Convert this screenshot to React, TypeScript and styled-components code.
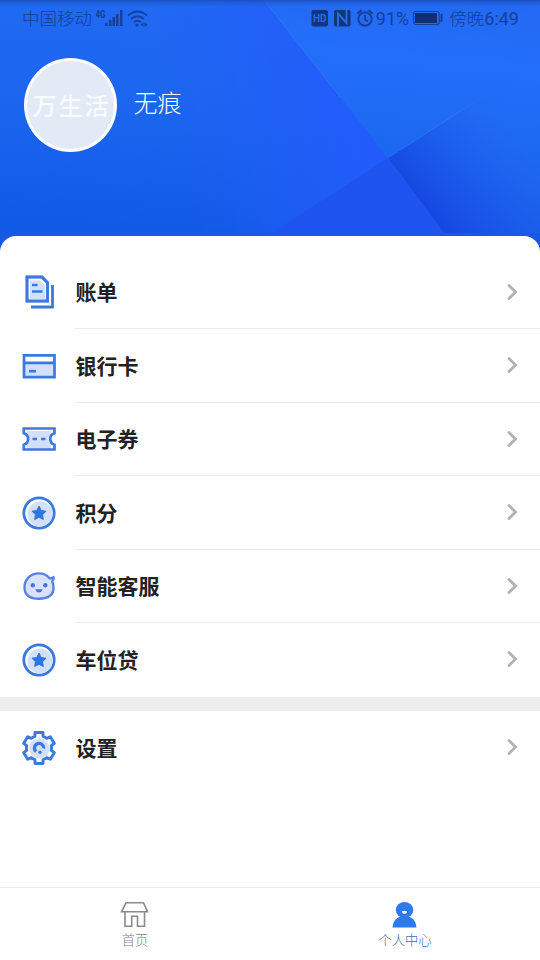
import React from "react";
import styled, { createGlobalStyle } from "styled-components";

const GlobalStyle = createGlobalStyle`
  * { box-sizing: border-box; }
  body { margin: 0; background: #fff; }
`;

const cjk = `"Noto Sans CJK SC", sans-serif`;

const Screen = styled.div`
  width: 540px;
  height: 960px;
  display: flex;
  flex-direction: column;
  overflow: hidden;
  background: #fff;
  font-family: ${cjk};
`;

const Header = styled.header`
  position: relative;
  flex: none;
  height: 252px;
  background: #1a58e4;
`;

const Backdrop = styled.svg`
  position: absolute;
  top: 0;
  left: 0;
  display: block;
`;

const StatusBar = styled.div`
  position: relative;
  height: 37px;
  padding: 0 21px 0 22px;
  display: flex;
  justify-content: space-between;
  align-items: center;
  color: #153f98;
`;

const StatusGroup = styled.div`
  display: flex;
  align-items: center;
  height: 24px;
`;

const StatusText = styled.span<{ $size: number; $family?: string; $ml?: number }>`
  font: ${(p) => (p.$family ? 400 : 300)} ${(p) => p.$size}px/24px ${(p) => p.$family ?? cjk};
  margin-left: ${(p) => p.$ml ?? 0}px;
  margin-top: ${(p) => (p.$family ? 0 : -2)}px;
  white-space: nowrap;
`;

const StatusIcon = styled.svg<{ $ml: number }>`
  display: block;
  flex: none;
  margin-left: ${(p) => p.$ml}px;
  margin-top: -1px;
`;

const Profile = styled.div`
  position: relative;
  display: flex;
  align-items: center;
  margin: 21px 0 0 24px;
  gap: 16.5px;
`;

const Avatar = styled.div`
  width: 93px;
  height: 94px;
  border-radius: 50%;
  border: 3px solid #fcfdff;
  background: #e2eaf6;
  display: flex;
  align-items: center;
  justify-content: center;
  color: #f8fbff;
  font-size: 24px;
  font-weight: 500;
  line-height: 30px;
  letter-spacing: 2px;
  text-indent: 2px;
  white-space: nowrap;
`;

const UserName = styled.div`
  color: #fff;
  font-size: 24px;
  font-weight: 300;
  line-height: 32px;
  margin-top: -7px;
`;

const Sheet = styled.main`
  position: relative;
  flex: 1;
  margin-top: -16.5px;
  padding-top: 20px;
  border-radius: 16px 16px 0 0;
  background: #fff;
`;

const Row = styled.div`
  height: 73.5px;
  padding-left: 21px;
  display: flex;
  align-items: center;
`;

const RowIcon = styled.svg`
  display: block;
  flex: none;
  width: 36px;
  height: 36px;
`;

const RowBody = styled.div<{ $line: boolean }>`
  flex: 1;
  height: 100%;
  margin-left: 18px;
  padding: 0 21px 0 0.5px;
  display: flex;
  align-items: center;
  justify-content: space-between;
  border-bottom: 1px solid ${(p) => (p.$line ? "#ececec" : "transparent")};
`;

const Label = styled.span`
  color: #222;
  font-size: 21px;
  font-weight: 600;
  line-height: 30px;
  margin-top: -1px;
`;

const Band = styled.div`
  height: 14.5px;
  background: #eee;
`;

const TabBar = styled.nav`
  flex: none;
  height: 73px;
  border-top: 1px solid #ededed;
  display: flex;
`;

const Tab = styled.div<{ $active?: boolean }>`
  flex: 1;
  padding-top: 12px;
  display: flex;
  flex-direction: column;
  align-items: center;
  color: ${(p) => (p.$active ? "#3a71c6" : "#858585")};
  font-size: 13.3px;
  font-weight: 300;
  line-height: 18px;
  gap: 3px;
`;

const blue = "#3a7ae0";
const pale = "#d2e0fa";

const BillIcon = () => (
  <RowIcon viewBox="0 0 36 36" fill="none" stroke={blue} strokeWidth="2.8">
    <path d="M6 3h15l5.500 5.500v18.500H6z" fill="#fff" />
    <path d="M9 6.500h10l5 5v14H9z" fill={pale} stroke="none" />
    <path d="M6 3h15l5.500 5.500v18.500H6zM11 11h5.500M11 17.500h10.500" strokeWidth="2.600" />
    <path d="M10 33h21.500V11" />
  </RowIcon>
);

const CardIcon = () => (
  <RowIcon viewBox="0 0 36 36" fill="none" stroke={blue} strokeWidth="2.7">
    <path d="M3 16h30v12H3z" fill={pale} stroke="none" />
    <path d="M3 7.300h30.500v21.800H3zM3 14.800h30" />
    <path d="M8 23.200h7" />
  </RowIcon>
);

const TicketIcon = () => (
  <RowIcon viewBox="0 0 36 36" fill="none" stroke={blue} strokeWidth="2.7">
    <path d="M6 10h24v3q-5 5 0 11v4H6v-4q5-5 0-11z" fill={pale} stroke="none" />
    <path d="M2.800 7.500H33.500V12.300A6 6 0 0 0 33.500 23.800V28.500H2.800V23.800A6 6 0 0 0 2.800 12.300z" />
    <path d="M11.500 18H16M20 18h4.500" />
  </RowIcon>
);

const StarIcon = () => (
  <RowIcon viewBox="0 0 36 36">
    <circle cx="18" cy="18" r="15.200" fill="#fff" stroke={blue} strokeWidth="2.8" />
    <circle cx="19" cy="19" r="12.500" fill={pale} />
    <path
      d="M18 11l2.200 4.500 4.800.7-3.400 3.500.7 4.800L18 22.300l-4.300 2.200.7-4.800L11 16.200l4.800-.7z"
      fill="#2f74e2"
      stroke="#2f74e2"
      strokeLinejoin="round"
    />
  </RowIcon>
);

const RobotIcon = () => (
  <RowIcon viewBox="0 0 36 36">
    <path
      d="M28.500 10.200C25.500 6.500 21.800 5.400 17.800 5.400 9.500 5.400 3.500 11.500 3.500 19.200 3.500 27.500 9.500 30.700 18 30.700S32.500 27.500 32.500 19.800C32.500 17 32 15.200 31.200 13.500Q33 11.800 32.600 9.300Q30.500 10.600 28.500 10.200z"
      fill="#d9e2fd"
      stroke="#5b80e4"
      strokeWidth="2.400"
      strokeLinejoin="round"
    />
    <circle cx="11.800" cy="17.300" r="2.200" fill="#4c73df" />
    <circle cx="24.300" cy="17.300" r="2.200" fill="#4c73df" />
    <path d="M14.500 21.200h7q-.8 3.300-3.500 3.300t-3.500-3.300z" fill="#4c73df" />
  </RowIcon>
);

const GearIcon = () => (
  <RowIcon viewBox="0 0 36 36" fill="none" stroke={blue} strokeWidth="2.9" strokeLinejoin="round">
    <path
      d="M14 2.500h8v3.800Q24 7 25.800 8.400L29.300 6.800 33.300 13.300 30.300 15.600Q30.800 18 30.300 20.400L33.300 22.700 29.300 29.200 25.800 27.600Q24 29 22 29.700V33.500H14V29.700Q12 29 10.200 27.600L6.700 29.200 2.700 22.700 5.700 20.400Q5.200 18 5.700 15.600L2.700 13.300 6.700 6.800 10.200 8.400Q12 7 14 6.300z"
      fill="#fff"
    />
    <circle cx="18.500" cy="18.500" r="10.300" fill={pale} stroke="none" />
    <path d="M15.200 21.600A4.600 4.600 0 1 1 22.600 18.500" strokeWidth="3.200" />
    <circle cx="19" cy="22.300" r="1.700" fill={blue} stroke="none" />
  </RowIcon>
);

const Chevron = () => (
  <svg width="14" height="20" viewBox="0 0 14 20" fill="none" stroke="#b2b2b2" strokeWidth="2.9" strokeLinecap="round">
    <path d="M4 3.500L10.500 10 4 16.500" />
  </svg>
);

const services: { label: string; Icon: React.FC }[] = [
  { label: "账单", Icon: BillIcon },
  { label: "银行卡", Icon: CardIcon },
  { label: "电子券", Icon: TicketIcon },
  { label: "积分", Icon: StarIcon },
  { label: "智能客服", Icon: RobotIcon },
  { label: "车位贷", Icon: StarIcon },
];

const MenuRow = ({ label, Icon, line }: { label: string; Icon: React.FC; line: boolean }) => (
  <Row>
    <Icon />
    <RowBody $line={line}>
      <Label>{label}</Label>
      <Chevron />
    </RowBody>
  </Row>
);

const HeaderBackdrop = () => (
  <Backdrop width="540" height="233" viewBox="0 0 540 233">
    <defs>
      <linearGradient id="base" x1="0.5" y1="0" x2="0.35" y2="1">
        <stop offset="0" stopColor="#216af4" />
        <stop offset="0.5" stopColor="#1b65ef" />
        <stop offset="1" stopColor="#115ae6" />
      </linearGradient>
      <linearGradient id="glow" gradientUnits="userSpaceOnUse" x1="180" y1="150" x2="370" y2="110">
        <stop offset="0" stopColor="#245cfa" stopOpacity="0" />
        <stop offset="1" stopColor="#235bfb" />
      </linearGradient>
      <linearGradient id="upper" gradientUnits="userSpaceOnUse" x1="420" y1="0" x2="400" y2="233">
        <stop offset="0" stopColor="#2369f3" />
        <stop offset="0.25" stopColor="#236ffa" />
        <stop offset="0.65" stopColor="#1d68f0" />
        <stop offset="1" stopColor="#1a5ee8" />
      </linearGradient>
      <linearGradient id="fold" gradientUnits="userSpaceOnUse" x1="412" y1="200" x2="505" y2="120">
        <stop offset="0" stopColor="#1646e0" />
        <stop offset="0.45" stopColor="#1a55ea" stopOpacity="0.7" />
        <stop offset="1" stopColor="#1f65f1" stopOpacity="0" />
      </linearGradient>
      <linearGradient id="edge" gradientUnits="userSpaceOnUse" x1="388" y1="158" x2="484" y2="97">
        <stop offset="0" stopColor="#3b7dfa" stopOpacity="0.2" />
        <stop offset="0.6" stopColor="#3b7dfa" stopOpacity="0.7" />
        <stop offset="1" stopColor="#3b7dfa" stopOpacity="0" />
      </linearGradient>
      <linearGradient id="shade" x1="0" y1="0" x2="0" y2="1">
        <stop offset="0" stopColor="#153f99" stopOpacity="0.55" />
        <stop offset="1" stopColor="#1d55c4" stopOpacity="0" />
      </linearGradient>
    </defs>
    <path d="M0 0h540v233H0z" fill="url(#base)" />
    <path d="M0 0h264l124 158-116 75H0z" fill="url(#glow)" />
    <path d="M264 0h276v233h-96L388 158z" fill="url(#upper)" />
    <path d="M388 158l152-98v173h-96z" fill="url(#fold)" />
    <path d="M388 158l56 75H272z" fill="#1f54f1" />
    <path d="M264 0l76 97" stroke="#4284fb" strokeOpacity=".45" />
    <path d="M388 158l96-62" stroke="url(#edge)" />
    <path d="M0 0h540v7H0z" fill="url(#shade)" />
  </Backdrop>
);

export default function App() {
  return (
    <Screen>
      <GlobalStyle />
      <Header>
        <HeaderBackdrop />
        <StatusBar>
          <StatusGroup>
            <StatusText $size={17.5}>中国移动</StatusText>
            <StatusIcon $ml={4} width="53" height="20" viewBox="0 0 53 20" fill="#15409c">
              <text x="-0.5" y="9.500" fontSize="10" fontWeight="700" fontFamily="Roboto, sans-serif" textLength="10" lengthAdjust="spacingAndGlyphs">4G</text>
              <path d="M9 15h2.500v3H9zM13 12h2.500v6H13zM16.500 9H19v9h-2.500zM20 6h2.500v12H20zM24 2h2.500v16H24z" />
              <g fill="none" stroke="#15409c" strokeWidth="1.9">
                <path d="M32 7.500q9.500-8 19 0M35 11q6.500-5.500 13 0M38 14.300q3.500-3 7 0" />
              </g>
              <circle cx="41" cy="17" r="1.500" />
              <path d="M44.500 16.500l3-2.500v5zM51.500 16.500l-3-2.500v5z" />
            </StatusIcon>
          </StatusGroup>
          <StatusGroup>
            <StatusIcon $ml={0} width="64" height="20" viewBox="0 0 64 20">
              <rect x="0.500" y="2" width="16.500" height="16.500" rx="2" fill="#123679" />
              <text x="2" y="14" fontSize="10.500" fontWeight="700" fontFamily="Roboto, sans-serif" fill="#2a6ae8" textLength="13.500" lengthAdjust="spacingAndGlyphs">HD</text>
              <rect x="23" y="2" width="16.500" height="16.500" rx="2" fill="#123679" />
              <path d="M27 18.500V5.500l8.500 9.500V2" fill="none" stroke="#266ced" strokeWidth="1.900" />
              <g fill="none" stroke="#153f98" strokeWidth="1.900">
                <circle cx="54" cy="11" r="6.700" />
                <path d="M54 7v4.500l3 2M46.500 5.500l4-3.500M61.500 5.500L57.500 2" />
              </g>
            </StatusIcon>
            <StatusText $size={18} $family="Roboto, sans-serif" $ml={1}>91%</StatusText>
            <StatusIcon $ml={4} width="31" height="16" viewBox="0 0 31 16">
              <rect x="0.700" y="1.500" width="25.500" height="13" rx="2" fill="none" stroke="#15409c" strokeWidth="1.200" />
              <rect x="2" y="3" width="22" height="10" fill="#102f70" />
              <path d="M28.500 4v8" stroke="#15409c" strokeWidth="2" />
            </StatusIcon>
            <StatusText $size={17.5} $ml={5}>傍晚</StatusText>
            <StatusText $size={18} $family="Roboto, sans-serif">6:49</StatusText>
          </StatusGroup>
        </StatusBar>
        <Profile>
          <Avatar>万生活</Avatar>
          <UserName>无痕</UserName>
        </Profile>
      </Header>
      <Sheet>
        {services.map((s, i) => (
          <MenuRow key={s.label} {...s} line={i < services.length - 1} />
        ))}
        <Band />
        <MenuRow label="设置" Icon={GearIcon} line={false} />
      </Sheet>
      <TabBar>
        <Tab>
          <svg width="30" height="28" viewBox="0 0 30 28" fill="none" stroke="#8a8a8a" strokeWidth="1.600">
            <path d="M6 2.800h17.500l4 9H1.500zM5 11.800V26.300h6.700V16.300h5.800v10h7V11.800" />
          </svg>
          <span>首页</span>
        </Tab>
        <Tab $active>
          <svg width="30" height="28" viewBox="0 0 30 28" fill="#2f7aea">
            <ellipse cx="14.500" cy="10" rx="8.700" ry="8" />
            <path d="M2.500 27.500q.5-9 8-11h8q7.500 2 8 11z" />
            <path d="M11.800 11h5.400q-.5 3-2.700 3t-2.700-3z" fill="#fff" />
          </svg>
          <span>个人中心</span>
        </Tab>
      </TabBar>
    </Screen>
  );
}
